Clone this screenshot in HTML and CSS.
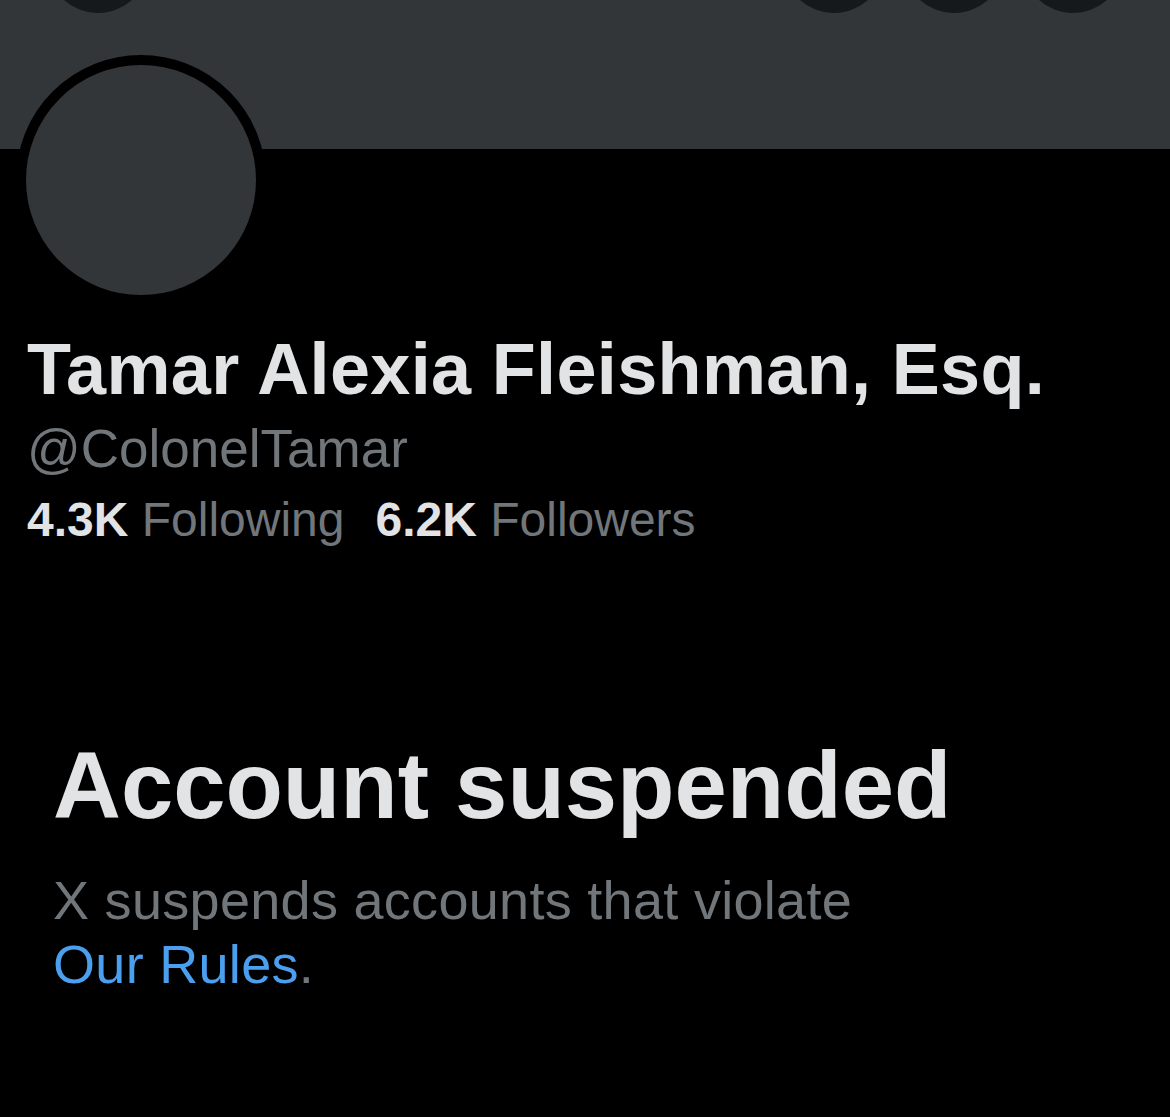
FILE: index.html
```html
<!DOCTYPE html>
<html lang="en">
<head>
<meta charset="utf-8">
<title>Account suspended</title>
<link rel="stylesheet" href="styles.css">
</head>
<body>
<div class="page">
  <header class="banner">
    <span class="nav-btn nav-back"></span>
    <span class="nav-btn nav-a"></span>
    <span class="nav-btn nav-b"></span>
    <span class="nav-btn nav-c"></span>
  </header>
  <section class="profile">
    <div class="avatar"></div>
    <h1 class="name">Tamar Alexia Fleishman, Esq.</h1>
    <div class="handle">@ColonelTamar</div>
    <div class="stats">
      <span class="stat"><b>4.3K</b> Following</span>
      <span class="stat"><b>6.2K</b> Followers</span>
    </div>
  </section>
  <section class="suspended">
    <h2 class="title">Account suspended</h2>
    <p class="desc">X suspends accounts that violate<br><a class="rules" href="#">Our Rules</a>.</p>
  </section>
</div>
</body>
</html>
```
FILE: styles.css
```css
html, body {
  margin: 0;
  padding: 0;
  background: #000;
}
body {
  font-family: "Liberation Sans", Arial, sans-serif;
  color: #e2e3e4;
}
.page {
  width: 1170px;
  height: 1117px;
  overflow: hidden;
  background: #000;
}
.banner {
  position: relative;
  height: 149px;
  background: #333639;
  overflow: hidden;
}
.nav-btn {
  position: absolute;
  top: -89px;
  width: 102px;
  height: 102px;
  border-radius: 50%;
  background: #16191c;
}
.nav-back { left: 47px; }
.nav-a { left: 783px; }
.nav-b { left: 903px; }
.nav-c { left: 1022px; }
.profile {
  padding-left: 27px;
}
.avatar {
  width: 230px;
  height: 230px;
  margin-top: -94px;
  margin-left: -11px;
  border: 10px solid #000;
  border-radius: 50%;
  background: #333639;
  position: relative;
}
.name {
  margin: 24px 0 0;
  font-size: 72px;
  line-height: 80px;
  font-weight: 700;
  color: #e2e3e4;
  letter-spacing: 0.35px;
}
.handle {
  margin-top: 10px;
  font-size: 53px;
  line-height: 60px;
  color: #71767b;
}
.stats {
  margin-top: 13px;
  display: flex;
  gap: 31px;
  font-size: 48px;
  line-height: 56px;
  color: #71767b;
}
.stat b {
  color: #e2e3e4;
  font-weight: 700;
}
.suspended {
  padding-left: 53px;
  margin-top: 186px;
}
.title {
  margin: 0;
  font-size: 94px;
  line-height: 104px;
  font-weight: 700;
  color: #e2e3e4;
}
.desc {
  margin: 30px 0 0;
  font-size: 54px;
  line-height: 64px;
  color: #71767b;
  letter-spacing: 0.3px;
}
.rules {
  color: #4a9fee;
  text-decoration: none;
}
```
